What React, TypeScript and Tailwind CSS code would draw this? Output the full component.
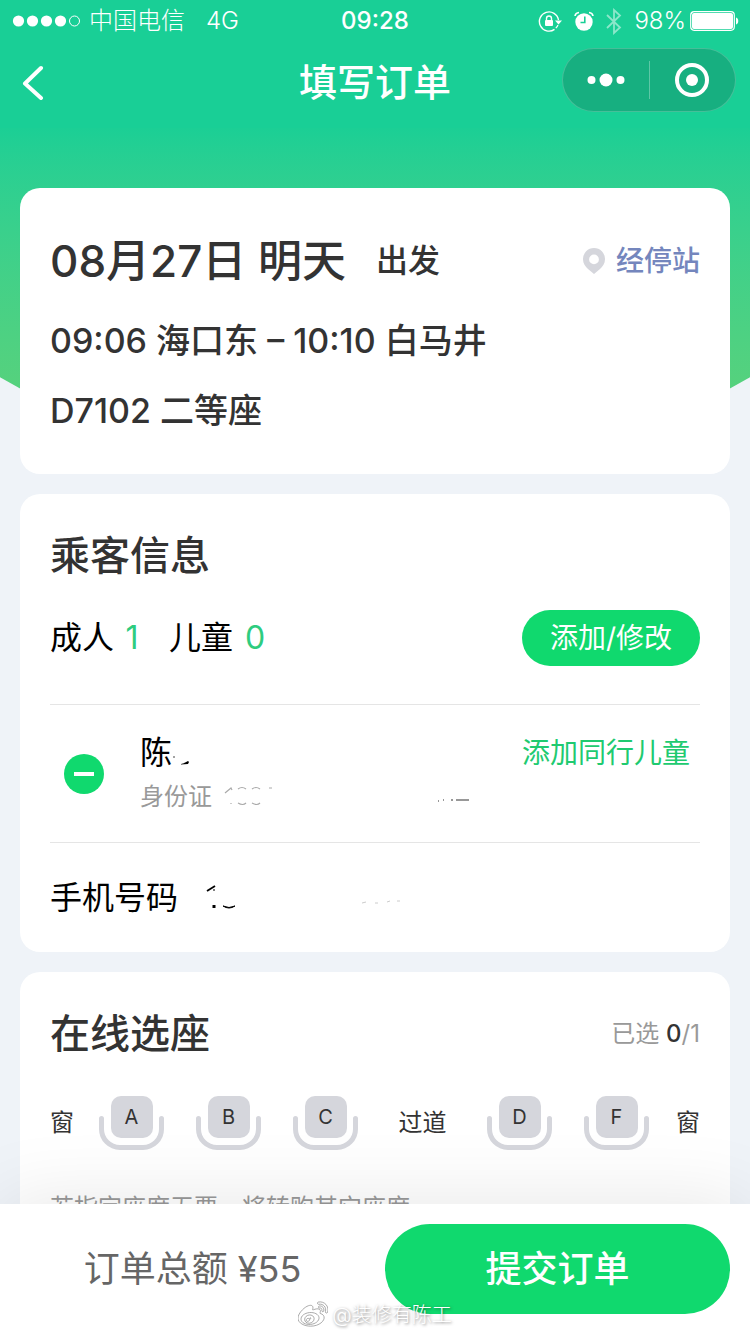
import type { ReactNode } from "react";
import { FaWeibo } from "react-icons/fa";

const seats = [
  { name: "A", aisle: false },
  { name: "B", aisle: false },
  { name: "C", aisle: false },
  { name: "过道", aisle: true },
  { name: "D", aisle: false },
  { name: "F", aisle: false },
];

function Card({ children }: { children: ReactNode }) {
  return <section className="rounded-[20px] bg-white px-[30px]">{children}</section>;
}

function StatusBar() {
  return (
    <div className="flex h-[42px] items-center px-3 text-[24px] leading-10">
      <div className="flex flex-1 items-center font-light">
        <svg className="mr-2 h-3 w-[69px]" viewBox="0 0 69 12" fill="#fff" aria-hidden="true">
          <circle cx="6.500" cy="6" r="5.600" />
          <circle cx="20.500" cy="6" r="5.600" />
          <circle cx="34.500" cy="6" r="5.600" />
          <circle cx="48.500" cy="6" r="5.600" />
          <circle cx="62.500" cy="6" r="5" fill="none" stroke="#fff" />
        </svg>
        <span>中国电信</span>
        <span className="ml-[21px]">4G</span>
      </div>
      <div className="font-medium">09:28</div>
      <div className="flex flex-1 items-center justify-end font-light">
        {/* rotation lock */}
        <svg className="mr-3 h-6 w-6" viewBox="0 0 24 24" fill="none" stroke="#fff" aria-hidden="true">
          <path d="M16.500 20.400A9.600 9.600 0 1 1 20.500 11" strokeWidth="1.400" />
          <path d="M17 11.500h7l-3.500 4z" fill="#fff" stroke="none" />
          <path d="M20 16c-.5 1.200-1.200 2.200-2.200 3.200" strokeWidth="1.200" />
          <rect x="7" y="11" width="8" height="6" rx="1" fill="#fff" stroke="none" />
          <path d="M8.500 11.500V9.500a2.500 2.500 0 0 1 5 0v2" strokeWidth="1.400" />
        </svg>
        {/* alarm */}
        <svg className="mr-3 h-5 w-5" viewBox="0 0 20 20" aria-hidden="true">
          <circle cx="10" cy="11" r="8.700" fill="#fff" />
          <path d="M1 5Q1.500 1.800 5 1.500M19 5Q18.500 1.800 15 1.500" stroke="#fff" strokeWidth="1.600" fill="none" />
          <path d="M10.800 5.500v6H6.500" stroke="#19cf96" strokeWidth="1.600" fill="none" />
        </svg>
        {/* bluetooth */}
        <svg className="mr-3 h-[27px] w-4 opacity-50" viewBox="0 0 16 27" fill="none" stroke="#fff" strokeWidth="1.800" aria-hidden="true">
          <path d="M1 7l13 12.500-6 5.500V2l6 5.500L1 20" />
        </svg>
        <span>98%</span>
        <svg className="-mr-px ml-1 h-5 w-[49px]" viewBox="0 0 49 20" aria-hidden="true">
          <rect x=".7" y=".7" width="43.600" height="18.600" rx="3.500" fill="none" stroke="#fff" strokeWidth="1.200" />
          <rect x="2" y="2" width="41" height="16" rx="2" fill="#fff" />
          <path d="M46 6.500c3 .5 3 6.500 0 7z" fill="#fff" />
        </svg>
      </div>
    </div>
  );
}

function NavBar() {
  return (
    <div className="grid h-[86px] grid-cols-[1fr_auto_1fr] items-center px-[14px] pb-[10px]">
      <button type="button" aria-label="返回" className="ml-[6px] justify-self-start">
        <svg className="h-10 w-7" viewBox="0 0 28 40" fill="none" stroke="#fff" strokeWidth="4" aria-hidden="true">
          <path d="M21 8L5 23.500 21 38" strokeLinecap="round" strokeLinejoin="round" />
        </svg>
      </button>
      <h1 className="pt-1 text-[38px] font-medium">填写订单</h1>
      <div className="flex h-16 w-[174px] items-center justify-self-end rounded-full border border-white/20 bg-[#17af80]">
        <button type="button" aria-label="更多" className="flex flex-1 justify-center">
          <svg className="h-[14px] w-[38px]" viewBox="0 0 38 14" fill="#fff" aria-hidden="true">
            <circle cx="4.500" cy="7" r="4" />
            <circle cx="19" cy="7" r="6.500" />
            <circle cx="33.500" cy="7" r="4" />
          </svg>
        </button>
        <span className="h-[38px] w-px bg-white/30" />
        <button type="button" aria-label="关闭" className="flex flex-1 justify-center">
          <svg className="h-[34px] w-[34px]" viewBox="0 0 34 34" aria-hidden="true">
            <circle cx="17" cy="17" r="15" fill="none" stroke="#fff" strokeWidth="4" />
            <circle cx="17" cy="17" r="6" fill="#fff" />
          </svg>
        </button>
      </div>
    </div>
  );
}

function Trip() {
  return (
    <Card>
      <div className="pt-7 pb-7 font-medium text-[#333]">
        <div className="flex h-[90px] items-center">
          <h2 className="text-[44px]">08月27日 明天</h2>
          <span className="ml-[30px] text-[32px]">出发</span>
          <button type="button" className="ml-auto flex items-center gap-[11px] text-[28px] text-[#7486bd]">
            <svg className="h-[26px] w-[22px]" viewBox="0 0 22 26" aria-hidden="true">
              <path
                d="M11 0a11 11 0 0 1 11 11.200c0 4.300-2.300 7.300-5 9.800L11 26l-6-5c-2.700-2.500-5-5.500-5-9.800A11 11 0 0 1 11 0zm0 6.500a4.900 4.900 0 1 0 0 9.800 4.900 4.900 0 0 0 0-9.800z"
                fill="#d5d6dc"
                fillRule="evenodd"
              />
            </svg>
            经停站
          </button>
        </div>
        <p className="text-[34px] leading-[70px]">09:06 海口东 – 10:10 白马井</p>
        <p className="text-[34px] leading-[70px]">D7102 二等座</p>
      </div>
    </Card>
  );
}

function Passengers() {
  return (
    <Card>
      <h2 className="pt-8 text-[40px] leading-[60px] font-medium text-[#333]">乘客信息</h2>
      <div className="flex items-center pt-6 pb-[38px] text-[32px] text-black">
        <span>成人</span>
        <span className="ml-2 w-5 text-center text-[#2ecc7f]">1</span>
        <span className="ml-[27px]">儿童</span>
        <span className="ml-3 text-[#2ecc7f]">0</span>
        <button type="button" className="ml-auto h-14 w-[178px] rounded-full bg-[#10d96e] text-[28px] text-white">
          添加/修改
        </button>
      </div>

      <div className="flex h-[139px] border-y border-[#e5e5e5]">
        <button type="button" aria-label="删除乘客" className="mx-[14px] flex h-10 w-10 items-center justify-center self-center rounded-full bg-[#10d96e]">
          <span className="h-1 w-5 bg-white" />
        </button>
        <div className="ml-[22px] flex-1 pt-6">
          <div className="flex text-[32px] leading-[48px] text-black">
            陈
            {/* rest of the name is rubbed out */}
            <svg className="h-12 w-5" viewBox="0 0 20 48" fill="#000" aria-hidden="true">
              <circle cx="2" cy="28" r=".7" />
              <path d="M9 35q4-1 7-3l1 1-1 2-7 .500z" />
            </svg>
          </div>
          <div className="flex text-[24px] leading-10 text-[#999]">
            身份证
            {/* id number is rubbed out */}
            <svg className="h-10 w-[260px]" viewBox="0 0 260 40" fill="none" stroke="#aaa" strokeWidth="1.200" aria-hidden="true">
              <path d="M13 16l6-5 1 2M19 27v-1M26 12q4-3 8 0M40 12q4-3 8 0M57 11h3M26 26q5 3 8 0M40 26q5 3 8 0" />
              <path d="M226 24h1M231 23h1M240 24v-2M244 23h13" stroke="#777" strokeWidth="1.500" />
            </svg>
          </div>
        </div>
        <button type="button" className="mt-[34px] mr-[10px] h-7 text-[28px] leading-7 text-[#20ca70]">
          添加同行儿童
        </button>
      </div>

      <div className="flex h-[109px] items-center text-[32px] text-black">
        手机号码
        {/* phone number is rubbed out */}
        <svg className="h-12 w-[230px]" viewBox="0 0 230 48" fill="none" aria-hidden="true">
          <path d="M29 17l8-5" stroke="#000" strokeWidth="1.800" />
          <path d="M36 15v2" stroke="#000" />
          <path d="M36 31v3" stroke="#000" strokeWidth="3" />
          <path d="M45 32q6 4 12 0-6 3-12 0z" stroke="#000" fill="#000" />
          <path d="M184 29l4-1M197 29h3M209 28l3-1M219 27h3" stroke="#ccc" />
        </svg>
      </div>
    </Card>
  );
}

function Seat({ name }: { name: string }) {
  return (
    <button type="button" className="relative h-[54px] w-[65px] text-[20px] text-[#333]">
      <svg className="absolute inset-0" viewBox="0 0 65 54" fill="none" aria-hidden="true">
        <rect x="12" width="42" height="42" rx="10" fill="#d5d6dc" />
        <path
          d="M2.500 22.500V33a18.500 18.500 0 0 0 18.500 18.500h23A18.500 18.500 0 0 0 62.500 33V22.500"
          stroke="#d5d6dc"
          strokeWidth="5"
          strokeLinecap="round"
        />
      </svg>
      <span className="relative block pb-3">{name}</span>
    </button>
  );
}

function SeatPicker() {
  return (
    <Card>
      <div className="flex items-center justify-between pt-8">
        <h2 className="text-[40px] leading-[60px] font-medium text-[#333]">在线选座</h2>
        <p className="text-[24px] text-[#999]">
          已选 <span className="font-medium text-[#333]">0</span>/1
        </p>
      </div>
      <div className="flex items-center pt-8 text-[24px] text-[#333]">
        <span className="w-[33px]">窗</span>
        {seats.map((seat) => (
          <div key={seat.name} className="flex flex-1 justify-center">
            {seat.aisle ? <span>{seat.name}</span> : <Seat name={seat.name} />}
          </div>
        ))}
        <span className="w-[35px] text-right">窗</span>
      </div>
      <p className="pt-[38px] pb-10 text-[24px] leading-10 text-[#999]">若指定座席无票，将转购其它座席</p>
    </Card>
  );
}

function SubmitBar() {
  return (
    <footer className="relative flex h-[130px] items-center gap-5 bg-white px-5 shadow-[0_0_80px_rgba(0,0,0,0.1)]">
      <p className="flex-1 text-center text-[36px] text-[#666]">订单总额 ¥55</p>
      <button type="button" className="h-[90px] flex-1 rounded-full bg-[#10d96e] text-[36px] font-medium text-white">
        提交订单
      </button>
      {/* watermark */}
      <div className="absolute inset-x-0 bottom-1 flex items-center justify-center gap-1 text-[20px] leading-[30px] font-light text-white [text-shadow:1px_1px_3px_rgba(0,0,0,0.5)]">
        <FaWeibo className="h-[30px] w-[30px] fill-white stroke-[#888] stroke-[12px]" />
        @装修有陈工
      </div>
    </footer>
  );
}

export default function App() {
  return (
    <div className="flex h-screen flex-col bg-[#eff3f8] font-['Inter','Noto_Sans_CJK_SC',sans-serif]">
      <header className="bg-[#19cf96] text-white">
        <StatusBar />
        <NavBar />
      </header>
      <main className="relative flex-1 overflow-y-auto [scrollbar-width:none]">
        <div className="absolute inset-x-0 top-0 h-[328px] bg-linear-to-b from-[#1bcf95] to-[#5fd276] [clip-path:polygon(0_0,100%_0,100%_76%,50%_140%,0_76%)]" />
        <div className="relative flex flex-col gap-5 px-5 pt-[60px] pb-5">
          <Trip />
          <Passengers />
          <SeatPicker />
        </div>
      </main>
      <SubmitBar />
    </div>
  );
}
